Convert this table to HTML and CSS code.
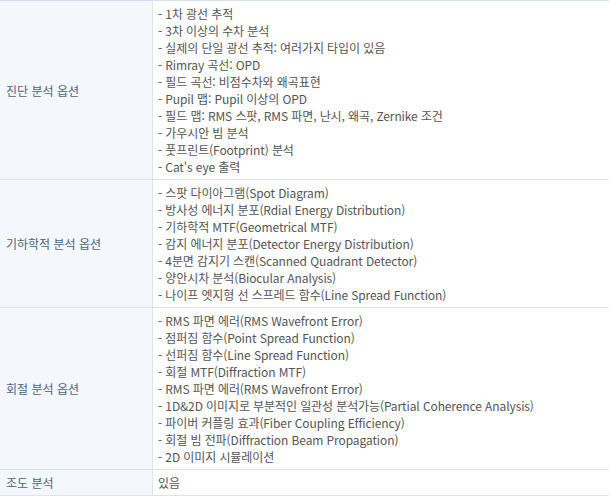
FILE: index.html
```html
<!DOCTYPE html>
<html lang="ko">
<head>
    <meta charset="UTF-8">
    <meta name="viewport" content="width=device-width, initial-scale=1.0">
    <title>분석 옵션</title>
    <link rel="stylesheet" href="styles.css">
</head>
<body>
    <table class="spec-table">
        <tr>
            <th>진단 분석 옵션</th>
            <td>
                <ul class="option-list">
                    <li>- 1차 광선 추적</li>
                    <li>- 3차 이상의 수차 분석</li>
                    <li>- 실제의 단일 광선 추적: 여러가지 타입이 있음</li>
                    <li>- Rimray 곡선: OPD</li>
                    <li>- 필드 곡선: 비점수차와 왜곡표현</li>
                    <li>- Pupil 맵: Pupil 이상의 OPD</li>
                    <li>- 필드 맵: RMS 스팟, RMS 파면, 난시, 왜곡, Zernike 조건</li>
                    <li>- 가우시안 빔 분석</li>
                    <li>- 풋프린트(Footprint) 분석</li>
                    <li>- Cat's eye 출력</li>
                </ul>
            </td>
        </tr>
        <tr>
            <th>기하학적 분석 옵션</th>
            <td>
                <ul class="option-list">
                    <li>- 스팟 다이아그램(Spot Diagram)</li>
                    <li>- 방사성 에너지 분포(Rdial Energy Distribution)</li>
                    <li>- 기하학적 MTF(Geometrical MTF)</li>
                    <li>- 감지 에너지 분포(Detector Energy Distribution)</li>
                    <li>- 4분면 감지기 스캔(Scanned Quadrant Detector)</li>
                    <li>- 양안시차 분석(Biocular Analysis)</li>
                    <li>- 나이프 엣지형 선 스프레드 함수(Line Spread Function)</li>
                </ul>
            </td>
        </tr>
        <tr>
            <th>회절 분석 옵션</th>
            <td>
                <ul class="option-list">
                    <li>- RMS 파면 에러(RMS Wavefront Error)</li>
                    <li>- 점퍼짐 함수(Point Spread Function)</li>
                    <li>- 선퍼짐 함수(Line Spread Function)</li>
                    <li>- 회절 MTF(Diffraction MTF)</li>
                    <li>- RMS 파면 에러(RMS Wavefront Error)</li>
                    <li>- 1D&amp;2D 이미지로 부분적인 일관성 분석가능(Partial Coherence Analysis)</li>
                    <li>- 파이버 커플링 효과(Fiber Coupling Efficiency)</li>
                    <li>- 회절 빔 전파(Diffraction Beam Propagation)</li>
                    <li>- 2D 이미지 시뮬레이션</li>
                </ul>
            </td>
        </tr>
        <tr>
            <th>조도 분석</th>
            <td>있음</td>
        </tr>
    </table>
</body>
</html>
```

FILE: styles.css
```css
body {
    margin: 0;
    padding: 0;
    background-color: #ffffff;
    font-family: "Noto Sans CJK KR", "Noto Sans", sans-serif;
    font-size: 12px;
}

.spec-table {
    width: 609px;
    border-collapse: collapse;
    border-top: 1px solid #d8dfee;
}

.spec-table th,
.spec-table td {
    border-bottom: 1px solid #e1e3e8;
    padding: 4px 6px;
    line-height: 17px;
    text-align: left;
    vertical-align: middle;
}

.spec-table th {
    width: 140px;
    font-weight: normal;
    color: #4a6480;
    background-color: #f4f8fd;
    border-right: 1px solid #e1e3e8;
}

.spec-table td {
    color: #555555;
    padding-left: 5px;
    letter-spacing: -0.1px;
}

.option-list {
    list-style: none;
    margin: 0;
    padding: 0;
}
```
